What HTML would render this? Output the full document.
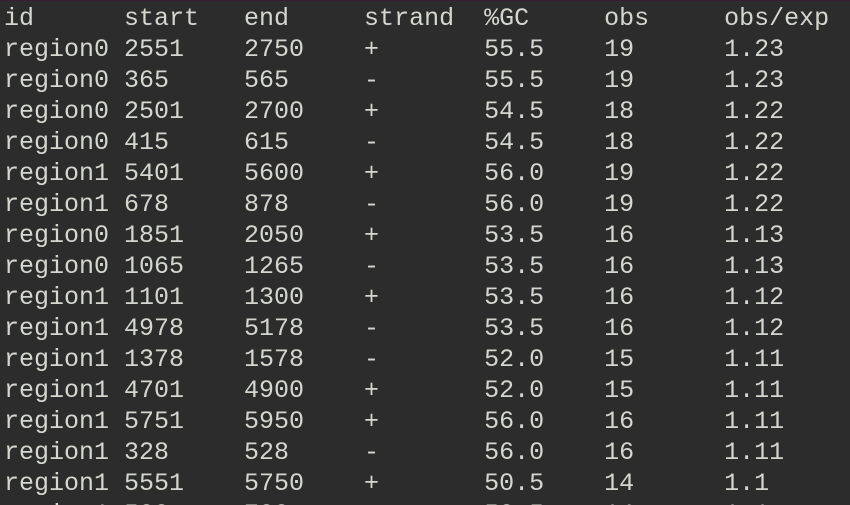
<!DOCTYPE html>
<html><head><style>
html,body{margin:0;padding:0;background:#2c2c2c;width:850px;height:505px;overflow:hidden}
body{border-top:1px solid #3a1e33;box-sizing:border-box}
pre{margin:0;padding:2px 0 0 4px;font-family:"Liberation Mono",monospace;font-size:25px;line-height:31px;color:#d3d7cf;letter-spacing:0}
</style></head><body><pre>id      start   end     strand  %GC     obs     obs/exp
region0 2551    2750    +       55.5    19      1.23
region0 365     565     -       55.5    19      1.23
region0 2501    2700    +       54.5    18      1.22
region0 415     615     -       54.5    18      1.22
region1 5401    5600    +       56.0    19      1.22
region1 678     878     -       56.0    19      1.22
region0 1851    2050    +       53.5    16      1.13
region0 1065    1265    -       53.5    16      1.13
region1 1101    1300    +       53.5    16      1.12
region1 4978    5178    -       53.5    16      1.12
region1 1378    1578    -       52.0    15      1.11
region1 4701    4900    +       52.0    15      1.11
region1 5751    5950    +       56.0    16      1.11
region1 328     528     -       56.0    16      1.11
region1 5551    5750    +       50.5    14      1.1
region1 500     700     -       50.5    14      1.1</pre></body></html>
